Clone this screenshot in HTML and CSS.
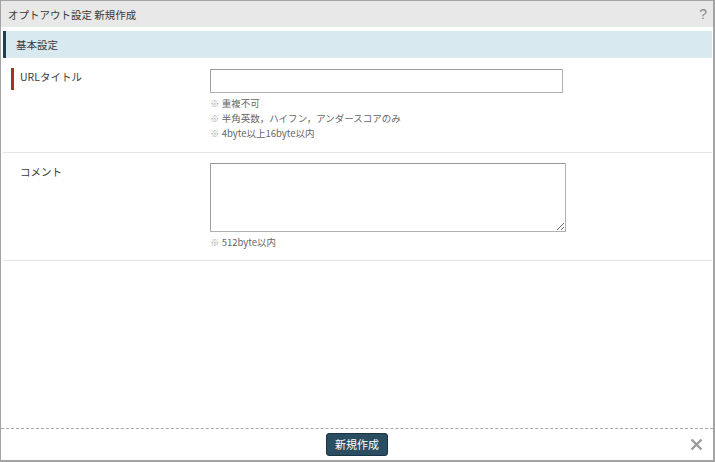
FILE: index.html
```html
<!DOCTYPE html>
<html lang="ja">
<head>
    <meta charset="UTF-8">
    <title>オプトアウト設定 新規作成</title>
    <link rel="stylesheet" href="styles.css">
</head>
<body>
    <div class="dialog">
        <div class="titlebar">
            <span class="title">オプトアウト設定 新規作成</span>
            <span class="help">?</span>
        </div>

        <div class="content">
            <div class="section-head">基本設定</div>

            <div class="row row-first">
                <div class="label required">URLタイトル</div>
                <div class="field">
                    <input type="text" class="text-input">
                    <ul class="hints">
                        <li><span class="mark">※</span> 重複不可</li>
                        <li><span class="mark">※</span> 半角英数，ハイフン，アンダースコアのみ</li>
                        <li><span class="mark">※</span> 4byte以上16byte以内</li>
                    </ul>
                </div>
            </div>

            <div class="row row-second">
                <div class="label">コメント</div>
                <div class="field">
                    <textarea class="text-area"></textarea>
                    <ul class="hints">
                        <li><span class="mark">※</span> 512byte以内</li>
                    </ul>
                </div>
            </div>
        </div>

        <div class="footer">
            <button class="submit">新規作成</button>
            <span class="close">
                <svg width="13" height="13" viewBox="0 0 13 13">
                    <path d="M1.5 1.5 L11.5 11.5 M11.5 1.5 L1.5 11.5" stroke="#9a9a9a" stroke-width="2.4" fill="none"/>
                </svg>
            </span>
        </div>
    </div>
</body>
</html>
```

FILE: styles.css
```css
body {
    margin: 0;
    font-family: "Noto Sans CJK JP", "Liberation Sans", sans-serif;
    font-size: 10.5px;
    color: #3a3a3a;
    background: #fff;
}

.dialog {
    width: 715px;
    height: 462px;
    box-sizing: border-box;
    border: 1px solid #a3a3a3;
    border-right-width: 2px;
    border-bottom-width: 2px;
    display: flex;
    flex-direction: column;
}

.titlebar {
    height: 26px;
    background: #e8e8e8;
    padding: 0 6px 0 7px;
    display: flex;
    align-items: center;
    justify-content: space-between;
}

.help {
    color: #8a8a8a;
    font-size: 14px;
    font-family: "Liberation Sans", sans-serif;
}

.content {
    flex: 1;
    padding: 4px 1px 0 2px;
}

.section-head {
    height: 27px;
    line-height: 27px;
    background: #d9e9f0;
    border-left: 3px solid #1e3d5c;
    padding-left: 10px;
}

.row {
    display: grid;
    grid-template-columns: 207px 1fr;
    border-bottom: 1px solid #e6e6e6;
}

.row-first {
    padding: 11px 0 11px;
}

.row-second {
    padding: 10px 0 10px;
}

.label {
    margin-left: 8px;
    padding-left: 6px;
    line-height: 18px;
    border-left: 3px solid transparent;
}

.label.required {
    margin-top: -1px;
    height: 22px;
    border-left-color: #a5321e;
}

.text-input {
    display: block;
    width: 353px;
    height: 24px;
    box-sizing: border-box;
    margin: 0;
    border: 1px solid #b0b0b0;
    border-top-color: #999;
    border-left-color: #a0a0a0;
    border-radius: 1px;
}

.text-area {
    display: block;
    width: 356px;
    height: 69px;
    box-sizing: border-box;
    margin: 0;
    border: 1px solid #b0b0b0;
    border-top-color: #999;
    border-left-color: #a0a0a0;
    border-radius: 1px;
    resize: both;
}

.hints {
    list-style: none;
    margin: 3px 0 0;
    padding: 0;
    font-size: 9.5px;
    line-height: 15px;
    color: #666;
}

.mark {
    color: #aaa;
}

.footer {
    position: relative;
    height: 31px;
    border-top: 1px dashed #a8a8a8;
    display: flex;
    align-items: center;
    justify-content: center;
}

.submit {
    width: 62px;
    height: 23px;
    margin-top: -1px;
    background: #2b4d61;
    border: 1px solid #1b3444;
    border-radius: 3px;
    color: #fff;
    font-family: inherit;
    font-size: 11px;
    padding: 0;
}

.close {
    position: absolute;
    right: 10px;
    top: 9px;
    line-height: 0;
}
```
